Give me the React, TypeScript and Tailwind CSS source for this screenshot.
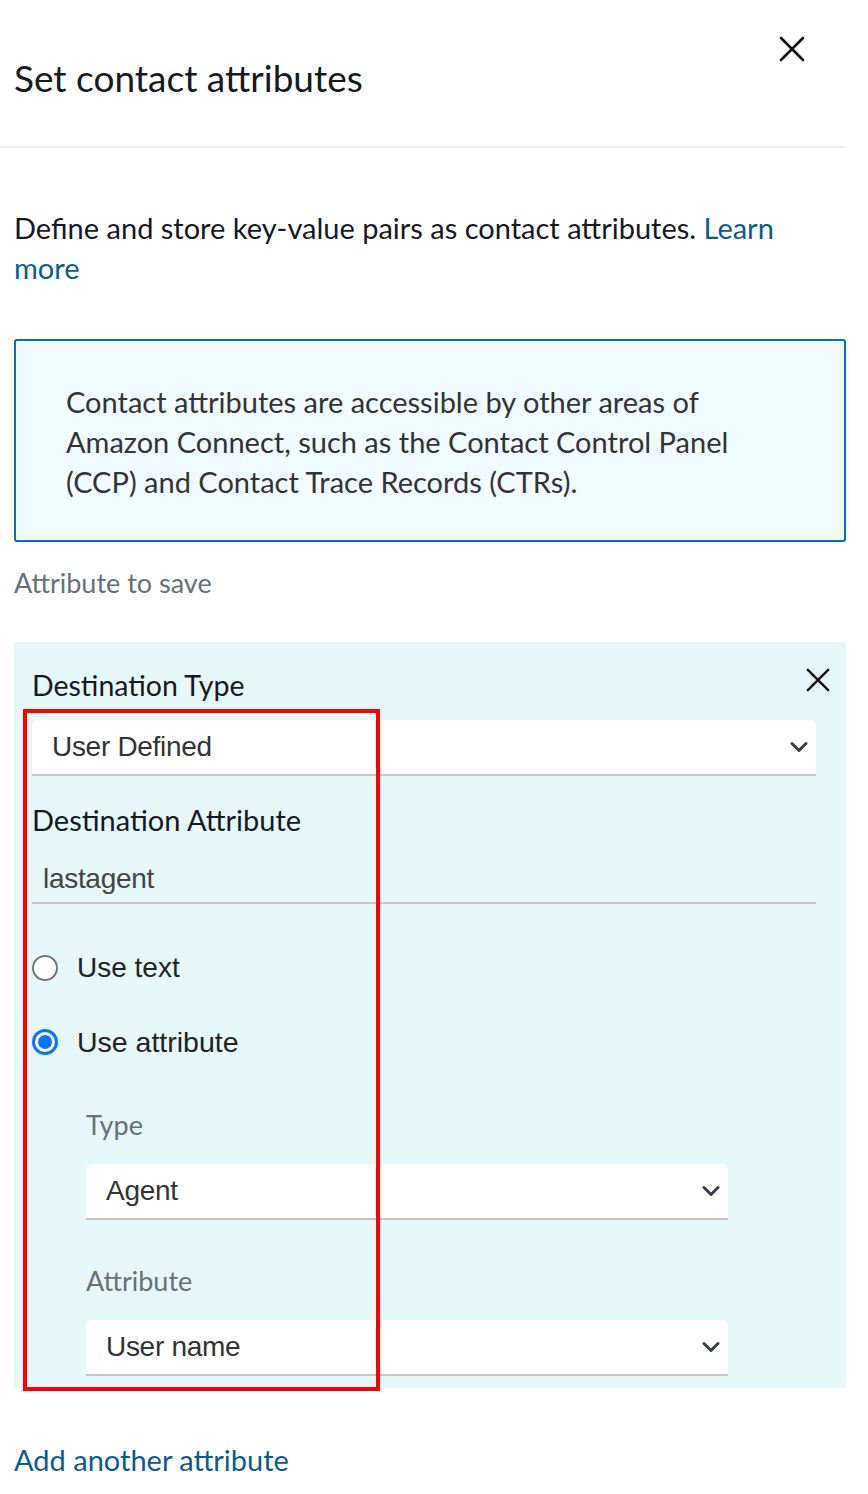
import React from "react";

const ember = { fontFamily: "Lato, 'Open Sans', sans-serif" };
const arial = { fontFamily: "'Liberation Sans', Arial, sans-serif" };

function Chevron() {
  return (
    <svg width="18" height="12" viewBox="0 0 18 12" fill="none">
      <path d="M2 2.5 L9 9.5 L16 2.5" stroke="#3a3f45" strokeWidth="3" strokeLinecap="round" strokeLinejoin="round" />
    </svg>
  );
}

function XIcon({ size = 26 }: { size?: number }) {
  return (
    <svg width={size} height={size} viewBox="0 0 26 26" fill="none">
      <path d="M2 2 L24 24 M24 2 L2 24" stroke="#111" strokeWidth="2.6" strokeLinecap="round" />
    </svg>
  );
}

function Select({ value }: { value: string }) {
  return (
    <div className="h-[56px] bg-white rounded-t-[6px] border-b-2 border-[#c6c6c6] flex items-center justify-between pl-[20px] pr-[8px]">
      <span className="text-[28px] text-[#333] tracking-[-0.3px]" style={arial}>{value}</span>
      <Chevron />
    </div>
  );
}

export default function App() {
  return (
    <div className="w-[868px] h-[1494px] bg-white relative overflow-hidden" style={ember}>
      {/* header */}
      <div className="flex justify-between items-start pl-[14px] pr-[40px] pt-[56px] h-[148px] border-b-2 border-[#eaeded] mr-[23px]">
        <h1 className="text-[37px] text-[#16191f] leading-[44px]">Set contact attributes</h1>
        <div className="-mt-[20px]"><XIcon size={26} /></div>
      </div>

      <div className="pl-[14px] pr-[22px]">
        <p className="mt-[60px] text-[29px] leading-[40px] text-[#16191f] pr-[20px]">
          <span>Define and store key-value pairs as contact attributes. </span>
          <span className="text-[#0a5c8c]">Learn</span>
          <br />
          <span className="text-[#0a5c8c]">more</span>
        </p>

        <div className="mt-[51px] border-2 border-[#0073bb] bg-[#f1faff] rounded-[3px] h-[203px] pl-[50px] pr-[20px] pt-[41px]">
          <p className="text-[29px] leading-[40px] text-[#333]">
            Contact attributes are accessible by other areas of<br />
            Amazon Connect, such as the Contact Control Panel<br />
            (CCP) and Contact Trace Records (CTRs).
          </p>
        </div>

        <div className="mt-[24px] text-[27px] leading-[34px] text-[#687078]">Attribute to save</div>

        {/* teal panel */}
        <div className="mt-[42px] bg-[#e5f7f7] h-[746px] pl-[18px] pr-[30px] pt-[24px]">
          <div className="flex justify-between items-center h-[38px]">
            <span className="text-[28.5px] text-[#16191f]">Destination Type</span>
            <div className="-mr-[14px] -mt-[10px]"><XIcon size={24} /></div>
          </div>
          <div className="mt-[16px]"><Select value="User Defined" /></div>

          <div className="mt-[26px] text-[29px] leading-[36px] text-[#16191f]">Destination Attribute</div>
          <div className="mt-[26px] h-[40px] border-b-2 border-[#c6c6c6] pl-[11px] flex items-start">
            <span className="text-[28px] text-[#444] leading-[30px] tracking-[-0.3px]" style={arial}>lastagent</span>
          </div>

          <div className="mt-[48px] flex items-center gap-[19px] h-[32px]" style={arial}>
            <span className="w-[26px] h-[26px] rounded-full border-2 border-[#767676] bg-white flex-none" />
            <span className="text-[28px] text-[#222]">Use text</span>
          </div>
          <div className="mt-[42px] flex items-center gap-[19px] h-[32px]" style={arial}>
            <span className="w-[26px] h-[26px] rounded-full border-[3px] border-[#0a74ff] bg-white flex-none flex items-center justify-center">
              <span className="w-[14px] h-[14px] rounded-full bg-[#0a74ff]" />
            </span>
            <span className="text-[28.5px] text-[#222]">Use attribute</span>
          </div>

          <div className="pl-[54px] pr-[88px]">
            <div className="mt-[50px] text-[27px] leading-[34px] text-[#687078]">Type</div>
            <div className="mt-[22px]"><Select value="Agent" /></div>
            <div className="mt-[44px] text-[27px] leading-[34px] text-[#687078]">Attribute</div>
            <div className="mt-[22px]"><Select value="User name" /></div>
          </div>
        </div>

        <div className="mt-[52px] text-[29px] leading-[40px] text-[#0a5c8c]">Add another attribute</div>
      </div>

      {/* red highlight overlay */}
      <div className="absolute left-[23px] top-[709px] w-[357px] h-[682px] border-[4px] border-[#ff0000] pointer-events-none" />
    </div>
  );
}
